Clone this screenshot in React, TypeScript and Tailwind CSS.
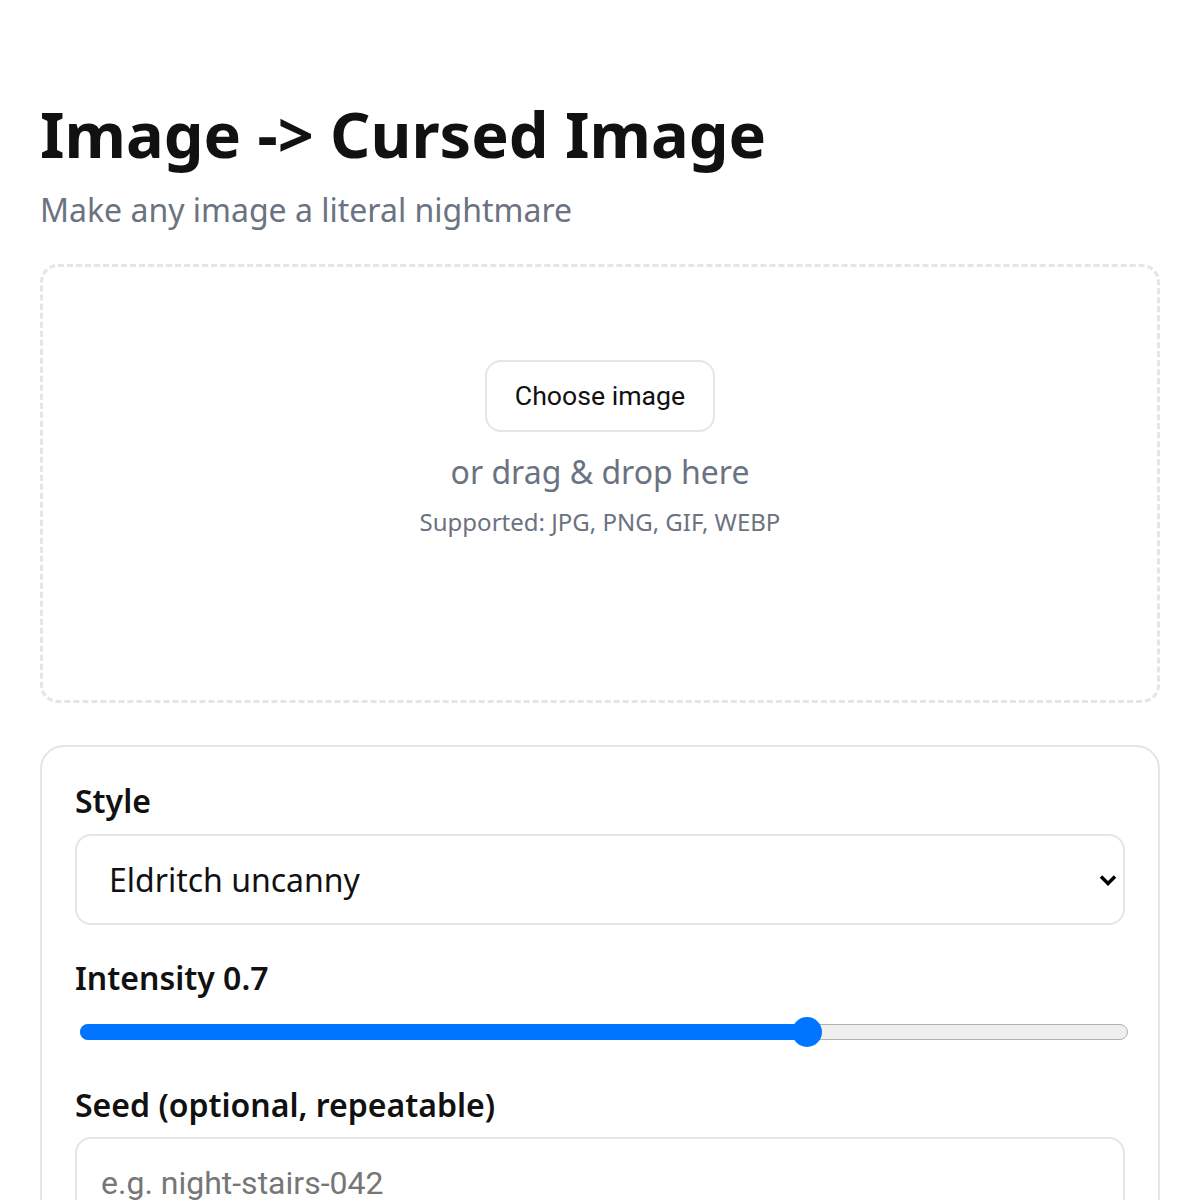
import { useState } from "react";

const styles = [
  "Eldritch uncanny",
  "Glitch horror",
  "Deep fried",
  "Liminal space",
];

export default function App() {
  const [style, setStyle] = useState(styles[0]);
  const [intensity] = useState(0.7);
  const [seed, setSeed] = useState("");

  return (
    <div className="min-h-screen bg-white font-['Noto_Sans',sans-serif] text-[#111]">
      <main className="mx-auto max-w-[1200px] px-10 pt-[95px] pb-10">
        {/* Header */}
        <h1 className="text-[63px] leading-[78px] font-bold">
          Image -&gt; Cursed Image
        </h1>
        <p className="mt-[16px] text-[32px] leading-[42px] text-[#6b7280]">
          Make any image a literal nightmare
        </p>

        {/* Drop zone */}
        <div className="mt-[33px] h-[439px] rounded-[18px] border-[3px] border-dashed border-[#e5e5e5] flex flex-col items-center pt-[93px]">
          <button className="w-[230px] h-[72px] rounded-[16px] border-2 border-[#e5e5e5] bg-white font-['Roboto',sans-serif] text-[26.67px] text-[#111]">
            Choose image
          </button>
          <p className="mt-[18px] text-[32px] leading-[44px] text-[#6b7280]">
            or drag &amp; drop here
          </p>
          <p className="mt-[12px] text-[24px] leading-[32px] text-[#6b7280]">
            Supported: JPG, PNG, GIF, WEBP
          </p>
        </div>

        {/* Options card */}
        <div className="mt-[42px] rounded-[24px] border-2 border-[#e5e5e5] px-[33px] pt-[32px] pb-10">
          <label className="block text-[32px] leading-[44px] font-semibold">Style</label>
          <div className="relative mt-[11px]">
            <select
              value={style}
              onChange={(e) => setStyle(e.target.value)}
              className="w-full h-[91px] appearance-none rounded-[16px] border-2 border-[#e5e5e5] bg-white pl-[32px] text-[32px] text-[#111] font-['Noto_Sans',sans-serif] outline-none"
            >
              {styles.map((s) => (
                <option key={s}>{s}</option>
              ))}
            </select>
            <svg
              className="pointer-events-none absolute right-[8px] top-1/2 -translate-y-1/2"
              width="18"
              height="12"
              viewBox="0 0 18 12"
            >
              <path d="M2 2.5 L9 9.5 L16 2.5" fill="none" stroke="#000" strokeWidth="3.5" />
            </svg>
          </div>

          <label className="mt-[31px] block text-[32px] leading-[44px] font-semibold">
            Intensity {intensity}
          </label>
          {/* Slider */}
          <div className="mt-[15px] ml-[5px] -mr-[3px] h-[34px] flex items-center">
            <div className="relative w-full h-[16px] rounded-full bg-[#efefef] border border-[#b2b2b2]">
              <div
                className="absolute -left-px -top-px -bottom-px rounded-full bg-[#0075ff]"
                style={{ width: `calc(${intensity * 100}% - ${intensity * 30 - 15}px)` }}
              />
              <div
                className="absolute top-1/2 -translate-y-1/2 w-[30px] h-[30px] rounded-full bg-[#0075ff]"
                style={{ left: `calc(${intensity * 100}% - ${intensity * 30}px)` }}
              />
            </div>
          </div>

          <label className="mt-[34px] block text-[32px] leading-[44px] font-semibold">
            Seed (optional, repeatable)
          </label>
          <input
            value={seed}
            onChange={(e) => setSeed(e.target.value)}
            placeholder="e.g. night-stairs-042"
            className="mt-[10px] w-full h-[91px] rounded-[16px] border-2 border-[#e5e5e5] bg-white px-[24px] font-['Roboto',sans-serif] text-[32px] text-[#111] placeholder:text-[#767676] outline-none"
          />
        </div>
      </main>
    </div>
  );
}
